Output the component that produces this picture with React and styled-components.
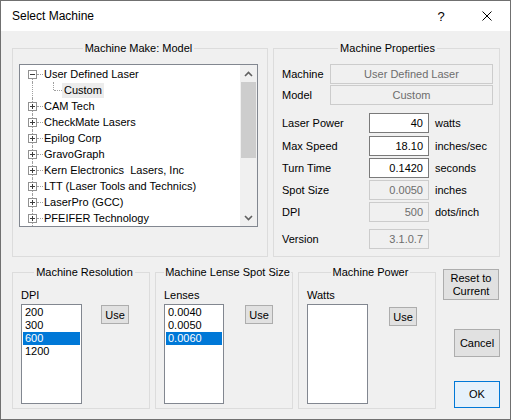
import styled, { createGlobalStyle } from 'styled-components';

const GlobalStyle = createGlobalStyle`
  html, body { margin: 0; padding: 0; background: #fff; }
  body { font-family: "Liberation Sans", Arial, sans-serif; font-size: 11px; }
`;

const Window = styled.div`
  width: 511px;
  height: 420px;
  box-sizing: border-box;
  border: 1px solid #707070;
  background: #f0f0f0;
  display: flex;
  flex-direction: column;
  font-family: "Liberation Sans", Arial, sans-serif;
  font-size: 11px;
  color: #000;
`;

const TitleBar = styled.div`
  height: 30px;
  flex: none;
  background: #fff;
  display: flex;
  align-items: center;
  padding-left: 11px;
`;

const Title = styled.div`
  flex: 1;
  font-size: 12px;
`;

const CaptionButton = styled.div`
  width: 46px;
  height: 30px;
  display: flex;
  align-items: center;
  justify-content: center;
  font-size: 13px;
`;

const Body = styled.div`
  flex: 1;
  display: flex;
  flex-direction: column;
  gap: 8px;
  padding: 10px 10px 10px 11px;
`;

const Row = styled.div`
  display: flex;
  gap: 5px;
  height: ${p => p.$h}px;
  flex: none;
`;

const Group = styled.fieldset`
  box-sizing: border-box;
  margin: 0;
  min-width: 0;
  width: ${p => p.$w}px;
  height: 100%;
  border: 1px solid #dcdcdc;
  padding: ${p => p.$pad};
`;

const Legend = styled.legend`
  margin: 0 auto;
  padding: 0 ${p => p.$px ?? 2}px;
  line-height: 14px;
  white-space: nowrap;
`;

/* tree view */
const TreeBox = styled.div`
  box-sizing: border-box;
  display: flex;
  height: 163px;
  border: 1px solid #828790;
  background: #fff;
`;

const TreeList = styled.div`
  flex: 1;
  padding: 1px 0 0 8px;
  overflow: hidden;
`;

const TreeRow = styled.div`
  display: flex;
  align-items: center;
  height: 16px;
`;

const Gutter = styled.div`
  position: relative;
  width: 9px;
  height: 16px;
  flex: none;
  display: flex;
  align-items: center;

  &::before {
    content: '';
    position: absolute;
    left: 4px;
    top: ${p => (p.$first ? '8px' : '0')};
    bottom: 0;
    border-left: 1px dotted #a0a0a0;
  }
`;

const ChildGutter = styled.div`
  position: relative;
  width: 13px;
  height: 16px;
  flex: none;
  margin-left: 12px;

  &::before {
    content: '';
    position: absolute;
    left: 4px;
    top: 0;
    height: 8px;
    border-left: 1px dotted #a0a0a0;
  }
  &::after {
    content: '';
    position: absolute;
    left: 5px;
    right: 0;
    top: 8px;
    border-top: 1px dotted #a0a0a0;
  }
`;

const Hook = styled.span`
  width: 6px;
  height: 0;
  flex: none;
  border-top: 1px dotted #a0a0a0;
`;

const NodeLabel = styled.span`
  white-space: pre;
  line-height: 15px;
  padding: 0 ${p => (p.$hl ? 2 : 1)}px;
  background: ${p => (p.$hl ? '#ececec' : 'transparent')};
`;

const ExpanderSvg = styled.svg`
  position: relative;
  z-index: 1;
  display: block;
`;

const Expander = ({ open }) => (
  <ExpanderSvg width="9" height="9" viewBox="0 0 9 9">
    <rect x="0.5" y="0.5" width="8" height="8" fill="#fff" stroke="#919191" />
    <line x1="2" y1="4.5" x2="7" y2="4.5" stroke="#3c3c3c" />
    {!open && <line x1="4.5" y1="2" x2="4.5" y2="7" stroke="#3c3c3c" />}
  </ExpanderSvg>
);

const ScrollBar = styled.div`
  width: 17px;
  flex: none;
  background: #f0f0f0;
  display: flex;
  flex-direction: column;
`;

const ScrollArrow = styled.div`
  height: 17px;
  flex: none;
  display: flex;
  align-items: center;
  justify-content: center;
`;

const ScrollTrack = styled.div`
  flex: 1;
  padding: 0 1px;
`;

const Thumb = styled.div`
  height: 76px;
  background: #cdcdcd;
`;

const Chevron = ({ down }) => (
  <svg width="9" height="6" viewBox="0 0 9 6">
    <polyline
      points={down ? '1,1 4.5,4.5 8,1' : '1,5 4.5,1.5 8,5'}
      fill="none"
      stroke="#606060"
      strokeWidth="1.6"
    />
  </svg>
);

/* properties */
const PropRow = styled.div`
  display: flex;
  align-items: center;
  height: 20px;
  margin-top: ${p => p.$mt || 0}px;
`;

const PropLabel = styled.div`
  width: ${p => p.$w}px;
  flex: none;
`;

const Field = styled.div`
  box-sizing: border-box;
  width: ${p => p.$w}px;
  height: 20px;
  flex: none;
  display: flex;
  align-items: center;
  justify-content: ${p => (p.$center ? 'center' : 'flex-end')};
  padding: 0 5px;
  border: 1px solid ${p => (p.$disabled ? '#cccccc' : '#7a7a7a')};
  background: ${p => (p.$disabled ? '#f0f0f0' : '#fff')};
  color: ${p => (p.$disabled ? '#6d6d6d' : '#000')};
`;

const Unit = styled.div`
  margin-left: 6px;
`;

/* bottom list groups */
const ListLabel = styled.div`
  line-height: 13px;
  margin-bottom: 2px;
`;

const ListRow = styled.div`
  display: flex;
  justify-content: space-between;
  align-items: flex-start;
  padding-right: ${p => p.$pr}px;
`;

const ListBox = styled.div`
  box-sizing: border-box;
  width: ${p => p.$w}px;
  height: 100px;
  padding: 1px;
  border: 1px solid #828790;
  background: #fff;
`;

const ListItem = styled.div`
  height: 13px;
  line-height: 13px;
  padding-left: 2px;
  background: ${p => (p.$sel ? '#0078d7' : 'transparent')};
  color: ${p => (p.$sel ? '#fff' : '#000')};
`;

const SmallButton = styled.button`
  box-sizing: border-box;
  width: 28px;
  height: 19px;
  margin-top: ${p => p.$mt}px;
  padding: 0;
  border: 1px solid #adadad;
  background: #e1e1e1;
  font: inherit;
  color: #000;
`;

const ButtonColumn = styled.div`
  margin-left: auto;
  width: 57px;
  display: flex;
  flex-direction: column;
  align-items: flex-end;
`;

const DialogButton = styled.button`
  box-sizing: border-box;
  width: ${p => p.$w}px;
  height: ${p => p.$h}px;
  margin-top: ${p => p.$mt}px;
  margin-right: ${p => p.$mr || 0}px;
  padding: 0;
  border: 1px solid ${p => (p.$default ? '#0078d7' : '#adadad')};
  background: ${p => (p.$default ? '#e5f1fb' : '#e1e1e1')};
  font: inherit;
  line-height: 13px;
  color: #000;
`;

const makers = [
  'CAM Tech',
  'CheckMate Lasers',
  'Epilog Corp',
  'GravoGraph',
  'Kern Electronics  Lasers, Inc',
  'LTT (Laser Tools and Technics)',
  'LaserPro (GCC)',
  'PFEIFER Technology',
];

const props = [
  { label: 'Laser Power', value: '40', unit: 'watts', mt: 8 },
  { label: 'Max Speed', value: '18.10', unit: 'inches/sec', mt: 3 },
  { label: 'Turn Time', value: '0.1420', unit: 'seconds', mt: 2 },
  { label: 'Spot Size', value: '0.0050', unit: 'inches', mt: 2, disabled: true },
  { label: 'DPI', value: '500', unit: 'dots/inch', mt: 2, disabled: true },
  { label: 'Version', value: '3.1.0.7', unit: '', mt: 7, disabled: true },
];

const ListGroup = ({ title, label, items, selected, pr, btnTop, listW, legendPx }) => (
  <Group $w={138} $pad="10px 1px 0 8px">
    <Legend $px={legendPx}>{title}</Legend>
    <ListLabel>{label}</ListLabel>
    <ListRow $pr={pr}>
      <ListBox $w={listW}>
        {items.map(it => (
          <ListItem key={it} $sel={it === selected}>{it}</ListItem>
        ))}
      </ListBox>
      <SmallButton $mt={btnTop}>Use</SmallButton>
    </ListRow>
  </Group>
);

export default function App() {
  return (
    <>
      <GlobalStyle />
      <Window>
        <TitleBar>
          <Title>Select Machine</Title>
          <CaptionButton>?</CaptionButton>
          <CaptionButton>
            <svg width="10" height="10" viewBox="0 0 10 10">
              <path d="M0.5 0.5 L9.5 9.5 M9.5 0.5 L0.5 9.5" stroke="#000" strokeWidth="1" />
            </svg>
          </CaptionButton>
        </TitleBar>

        <Body>
          <Row $h={216}>
            <Group $w={256} $pad="9px 9px 0 6px">
              <Legend>Machine Make: Model</Legend>
              <TreeBox>
                <TreeList>
                  <TreeRow>
                    <Gutter $first><Expander open /></Gutter>
                    <Hook />
                    <NodeLabel>User Defined Laser</NodeLabel>
                  </TreeRow>
                  <TreeRow>
                    <Gutter />
                    <ChildGutter />
                    <NodeLabel $hl>Custom</NodeLabel>
                  </TreeRow>
                  {makers.map(m => (
                    <TreeRow key={m}>
                      <Gutter><Expander /></Gutter>
                      <Hook />
                      <NodeLabel>{m}</NodeLabel>
                    </TreeRow>
                  ))}
                </TreeList>
                <ScrollBar>
                  <ScrollArrow><Chevron /></ScrollArrow>
                  <ScrollTrack><Thumb /></ScrollTrack>
                  <ScrollArrow><Chevron down /></ScrollArrow>
                </ScrollBar>
              </TreeBox>
            </Group>

            <Group $w={227} $pad="9px 6px 0 8px">
              <Legend>Machine Properties</Legend>
              <PropRow>
                <PropLabel $w={48}>Machine</PropLabel>
                <Field $w={163} $disabled $center>User Defined Laser</Field>
              </PropRow>
              <PropRow $mt={1}>
                <PropLabel $w={48}>Model</PropLabel>
                <Field $w={163} $disabled $center>Custom</Field>
              </PropRow>
              {props.map(p => (
                <PropRow key={p.label} $mt={p.mt}>
                  <PropLabel $w={87}>{p.label}</PropLabel>
                  <Field $w={60} $disabled={p.disabled}>{p.value}</Field>
                  <Unit>{p.unit}</Unit>
                </PropRow>
              ))}
            </Group>
          </Row>

          <Row $h={144}>
            <ListGroup
              title="Machine Resolution"
              label="DPI"
              items={['200', '300', '600', '1200']}
              selected="600"
              pr={19}
              btnTop={1}
              listW={61}
            />
            <ListGroup
              title="Machine Lense Spot Size"
              label="Lenses"
              items={['0.0040', '0.0050', '0.0060']}
              selected="0.0060"
              pr={18}
              btnTop={1}
              listW={60}
              legendPx={1}
            />
            <ListGroup
              title="Machine Power"
              label="Watts"
              items={[]}
              pr={17}
              btnTop={3}
              listW={61}
            />
            <ButtonColumn>
              <DialogButton $w={56} $h={31} $mt={4} $mr={1}>Reset to<br />Current</DialogButton>
              <DialogButton $w={46} $h={28} $mt={29}>Cancel</DialogButton>
              <DialogButton $w={46} $h={27} $mt={24} $default>OK</DialogButton>
            </ButtonColumn>
          </Row>
        </Body>
      </Window>
    </>
  );
}
